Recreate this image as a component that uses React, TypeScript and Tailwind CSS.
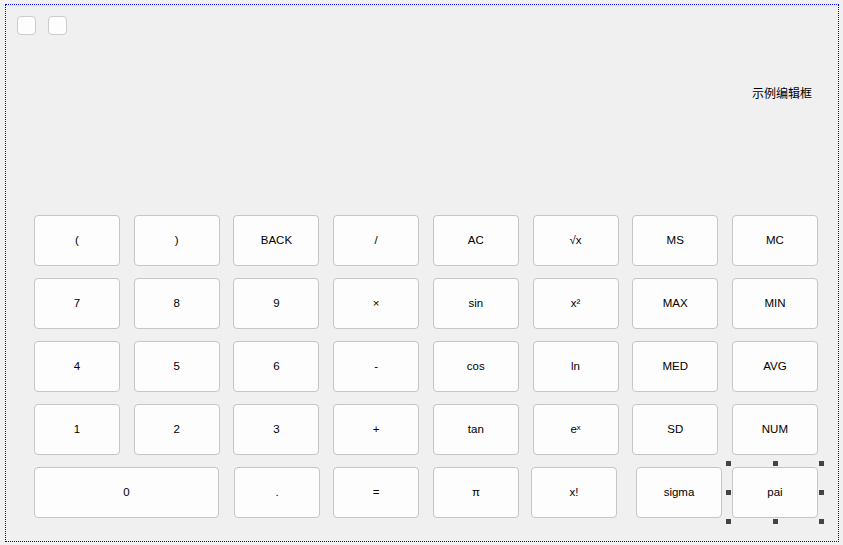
import React from "react";

const font = { fontFamily: '"Liberation Sans", Arial, sans-serif' };

function Btn({ label, className = "w-[86px]" }: { label: string; className?: string }) {
  return (
    <div
      className={`${className} h-[51px] flex items-center justify-center rounded-[4px] border border-[#c6c6c6] bg-[#fdfdfd] text-[11.5px] text-black`}
    >
      {label}
    </div>
  );
}

const rows: string[][] = [
  ["(", ")", "BACK", "/", "AC", "√x", "MS", "MC"],
  ["7", "8", "9", "×", "sin", "x²", "MAX", "MIN"],
  ["4", "5", "6", "-", "cos", "ln", "MED", "AVG"],
  ["1", "2", "3", "+", "tan", "eˣ", "SD", "NUM"],
];

function Handle() {
  return <div className="w-[5px] h-[5px] bg-[#444444]" />;
}

export default function App() {
  return (
    <div className="w-[843px] h-[545px] bg-[#f0f0f0] pt-[4px] pl-[5px]" style={font}>
      <div className="w-[834px] h-[538px] border border-dotted border-[#0000ff] flex flex-col">
        <div className="flex gap-[12px] pl-[11px] pt-[11px]">
          <div className="w-[19px] h-[19px] rounded-[4px] border border-[#cccccc] bg-[#fdfdfd]" />
          <div className="w-[19px] h-[19px] rounded-[4px] border border-[#cccccc] bg-[#fdfdfd]" />
        </div>
        <div className="flex justify-end pr-[26px] mt-[49px] h-[18px] items-center">
          <span
            className="text-[12px] text-black leading-none"
            style={{ fontFamily: '"Noto Sans CJK SC", "Liberation Sans", sans-serif' }}
          >
            示例编辑框
          </span>
        </div>
        <div className="ml-[28px] mt-[113px] w-[784px] flex flex-col gap-[12px]">
          {rows.map((r, i) => (
            <div key={i} className="flex justify-between">
              {r.map((l) => (
                <Btn key={l} label={l} />
              ))}
            </div>
          ))}
          <div className="flex">
            <Btn label="0" className="w-[185px]" />
            <Btn label="." className="w-[86px] ml-[15px]" />
            <Btn label="=" className="w-[86px] ml-[13px]" />
            <Btn label="π" className="w-[86px] ml-[14px]" />
            <Btn label="x!" className="w-[86px] ml-[12px]" />
            <Btn label="sigma" className="w-[86px] ml-[19px]" />
            <div className="relative ml-[10px]">
              <Btn label="pai" className="w-[86px]" />
              <div className="absolute left-[-6px] top-[-6px] w-[98px] h-[63px] flex flex-col justify-between pointer-events-none">
                <div className="flex justify-between"><Handle /><Handle /><Handle /></div>
                <div className="flex justify-between"><Handle /><Handle /></div>
                <div className="flex justify-between"><Handle /><Handle /><Handle /></div>
              </div>
            </div>
          </div>
        </div>
      </div>
    </div>
  );
}
